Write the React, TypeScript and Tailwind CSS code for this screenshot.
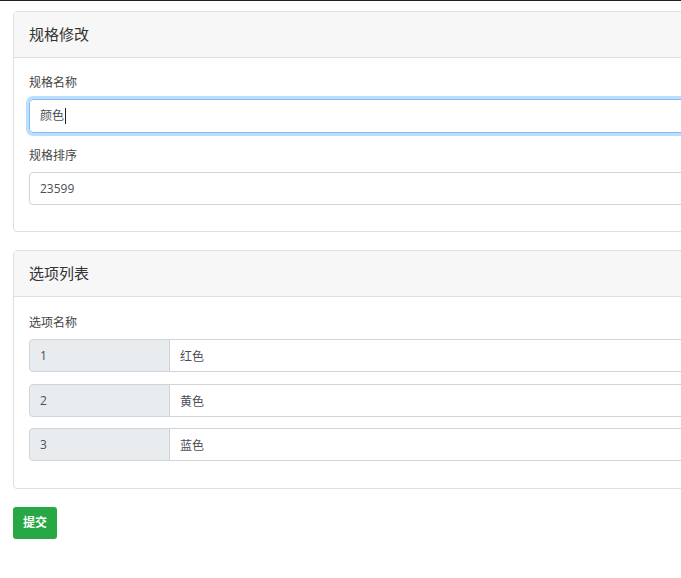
import React from 'react'

const font = { fontFamily: '"Open Sans", "Noto Sans CJK SC", sans-serif' }

function Card({ title, children }: { title: string; children: React.ReactNode }) {
  return (
    <div className="rounded-[4px] border border-[#dfdfdf] bg-white">
      <div className="h-[46px] border-b border-[#dfdfdf] bg-[#f7f7f7] px-[15px] text-[15px] leading-[45px] text-[#333]">
        {title}
      </div>
      <div className="px-[15px] pb-[15px] pt-[15px]">{children}</div>
    </div>
  )
}

function Label({ text }: { text: string }) {
  return <div className="mb-[6px] h-[20px] text-[12px] leading-[20px] text-[#444]">{text}</div>
}

const options = [
  { id: '1', name: '红色', gap: '' },
  { id: '2', name: '黄色', gap: 'mt-[12px]' },
  { id: '3', name: '蓝色', gap: 'mt-[11px]' },
]

export default function App() {
  return (
    <div className="min-h-[578px] w-full overflow-hidden border-t border-[#1d2024] bg-white" style={font}>
      <div className="w-[1000px] px-[13px] pt-[10px]">
        <Card title="规格修改">
          <div className="mb-[13px]">
            <Label text="规格名称" />
            <div className="flex h-[34px] items-center rounded-[4px] border border-[#80bdff] px-[10px] text-[12px] text-[#495057] shadow-[0_0_0_3px_rgba(0,123,255,0.25)]">
              颜色
              <span className="ml-px inline-block h-[16px] w-px bg-[#222]" />
            </div>
          </div>
          <div className="mb-[11px]">
            <Label text="规格排序" />
            <input
              readOnly
              value="23599"
              className="block h-[33px] w-full rounded-[4px] border border-[#ced4da] px-[10px] text-[12px] text-[#495057] outline-none"
            />
          </div>
        </Card>

        <div className="mt-[18px]">
          <Card title="选项列表">
            <div className="mb-[12px] pt-px">
              <Label text="选项名称" />
              {options.map((o) => (
                <div key={o.id} className={`flex h-[33px] ${o.gap}`}>
                  <div className="flex w-[141px] items-center rounded-l-[4px] border border-[#ced4da] bg-[#e9ecef] px-[10px] text-[12px] text-[#495057]">
                    {o.id}
                  </div>
                  <input
                    readOnly
                    value={o.name}
                    className="-ml-px block h-full flex-1 rounded-r-[4px] border border-[#ced4da] px-[10px] text-[12px] text-[#495057] outline-none"
                  />
                </div>
              ))}
            </div>
          </Card>
        </div>

        <button
          type="button"
          className="mt-[18px] h-[32px] rounded-[3px] bg-[#28a745] px-[10px] text-[12px] font-bold text-white"
        >
          提交
        </button>
      </div>
    </div>
  )
}
